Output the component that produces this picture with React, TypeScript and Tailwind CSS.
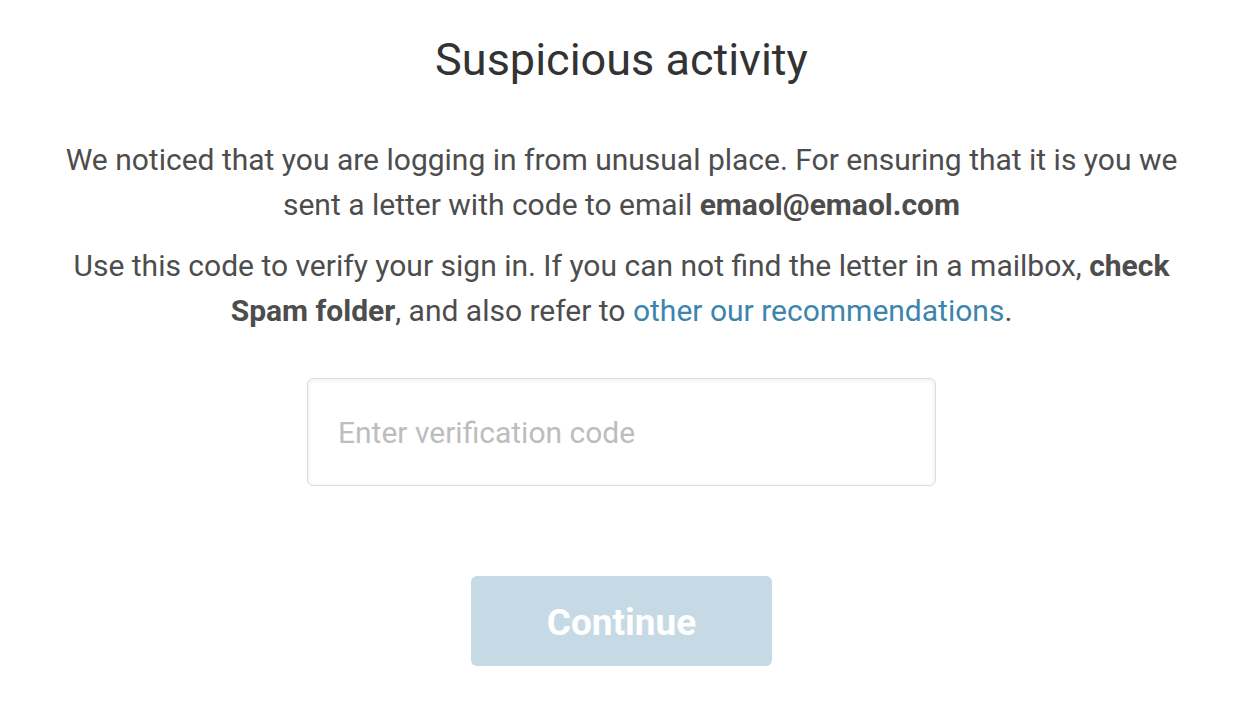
export default function App() {
  return (
    <div className="min-h-screen bg-white font-['Roboto',sans-serif] flex flex-col items-center pt-[30px] pr-[10px]">
      <h1 className="text-[45px] leading-[60px] text-[#333333] font-normal">Suspicious activity</h1>
      <div className="mt-[47px] w-[1150px] text-center text-[30px] leading-[45px] text-[#4d4d4d]">
        <p>
          We noticed that you are logging in from unusual place. For ensuring that it is you we sent a letter with code to email{" "}
          <b className="font-bold">emaol@emaol.com</b>
        </p>
        <p className="mt-[16px]">
          Use this code to verify your sign in. If you can not find the letter in a mailbox,{" "}
          <b className="font-bold">check Spam folder</b>, and also refer to{" "}
          <a href="#" className="text-[#3d85ad]">other our recommendations</a>.
        </p>
      </div>
      <input
        type="text"
        placeholder="Enter verification code"
        className="mt-[45px] w-[629px] h-[108px] rounded-[6px] border border-[#dddddd] px-[30px] text-[30px] text-[#333] placeholder:text-[#bdbdbd] shadow-[inset_0_1px_5px_rgba(0,0,0,0.08)] outline-none"
      />
      <button className="mt-[90px] w-[301px] h-[90px] pt-[4px] rounded-[6px] bg-[#c5dae5] text-white text-[37px] font-bold">
        Continue
      </button>
    </div>
  );
}
